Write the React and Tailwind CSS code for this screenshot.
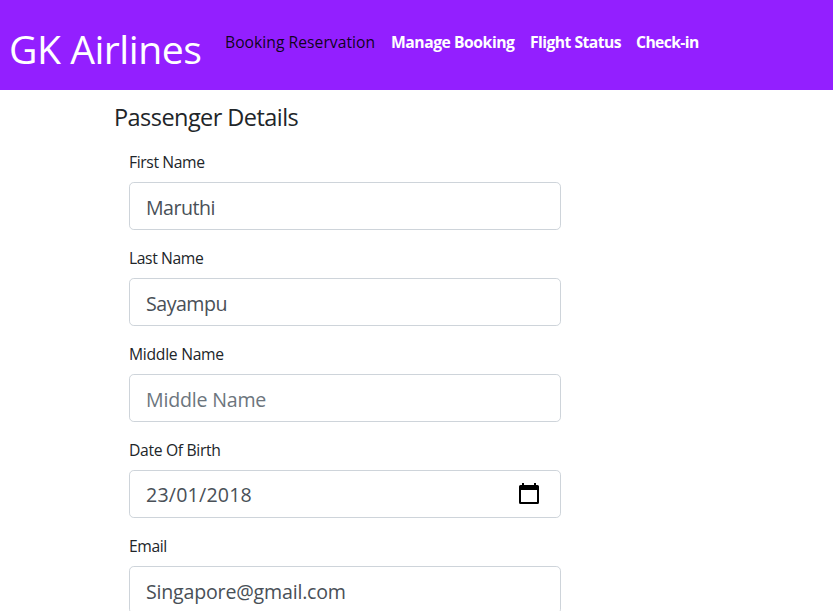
const fields = [
  { label: "First Name", value: "Maruthi", tracking: "tracking-[-0.5px]", labelTracking: "tracking-[-0.38px]" },
  { label: "Last Name", value: "Sayampu", tracking: "tracking-[-0.5px]", labelTracking: "tracking-[-0.4px]" },
  { label: "Middle Name", placeholder: "Middle Name", tracking: "tracking-[-0.2px]", labelTracking: "tracking-[-0.28px]" },
  { label: "Date Of Birth", value: "23/01/2018", date: true, tracking: "tracking-[0.2px]", labelTracking: "tracking-[-0.33px]" },
  { label: "Email", value: "Singapore@gmail.com", tracking: "tracking-[-0.2px]", labelTracking: "tracking-[-0.4px]" },
];

function CalendarIcon() {
  return (
    <svg width="20" height="21" viewBox="0 0 20 21" className="mr-[21px] mb-[1px] shrink-0">
      <path
        fill="#000"
        fillRule="evenodd"
        d="M3 0h2v2h10V0h2v2h1.5A1.5 1.5 0 0 1 20 3.5v16a1.5 1.5 0 0 1-1.5 1.5h-17A1.5 1.5 0 0 1 0 19.500v-16A1.500 1.500 0 0 1 1.500 2H3zM2 7v12h16V7z"
      />
    </svg>
  );
}

function Field({ label, value, placeholder, date, tracking, labelTracking }) {
  return (
    <div className="mb-4">
      <div className={`mb-2 h-6 text-[15.7px] leading-6 text-[#212529] ${labelTracking}`}>
        <span>{label}</span>
      </div>
      <div className="flex h-12 w-[432px] items-center justify-between rounded-[4.8px] border border-[#ced4da] bg-white pl-4">
        <span
          className={`text-[19.6px] leading-[30px] ${date ? "pt-[2px]" : "pt-[4px]"} ${value ? "text-[#495057]" : "text-[#6c757d]"} ${tracking}`}
        >
          {value || placeholder}
        </span>
        {date && <CalendarIcon />}
      </div>
    </div>
  );
}

export default function App() {
  return (
    <div className="h-[611px] w-full overflow-hidden bg-white font-['Open_Sans','Noto_Sans',sans-serif] text-[#212529]">
      <header className="flex h-[90px] whitespace-nowrap bg-[#931fff]">
        <h1 className="w-[225px] pt-[25px] pl-[9px] text-[39.2px] leading-[48px] tracking-[-0.5px] text-white">GK Airlines</h1>
        <nav className="flex pt-[30px] text-[15.7px] leading-6">
          <a className="w-[166px] tracking-[0.02px] text-black/90">Booking Reservation</a>
          <a className="w-[139px] font-bold tracking-[-0.46px] text-white">Manage Booking</a>
          <a className="w-[106px] font-bold tracking-[-0.55px] text-white">Flight Status</a>
          <a className="font-bold tracking-[-0.6px] text-white">Check-in</a>
        </nav>
      </header>
      <main className="pl-[114px]">
        <h4 className="pt-[13px] text-[23.5px] leading-[29px] tracking-[-0.55px]">Passenger Details</h4>
        <form className="pt-[18px] pl-[15px]">
          {fields.map((f) => (
            <Field key={f.label} {...f} />
          ))}
        </form>
      </main>
    </div>
  );
}
